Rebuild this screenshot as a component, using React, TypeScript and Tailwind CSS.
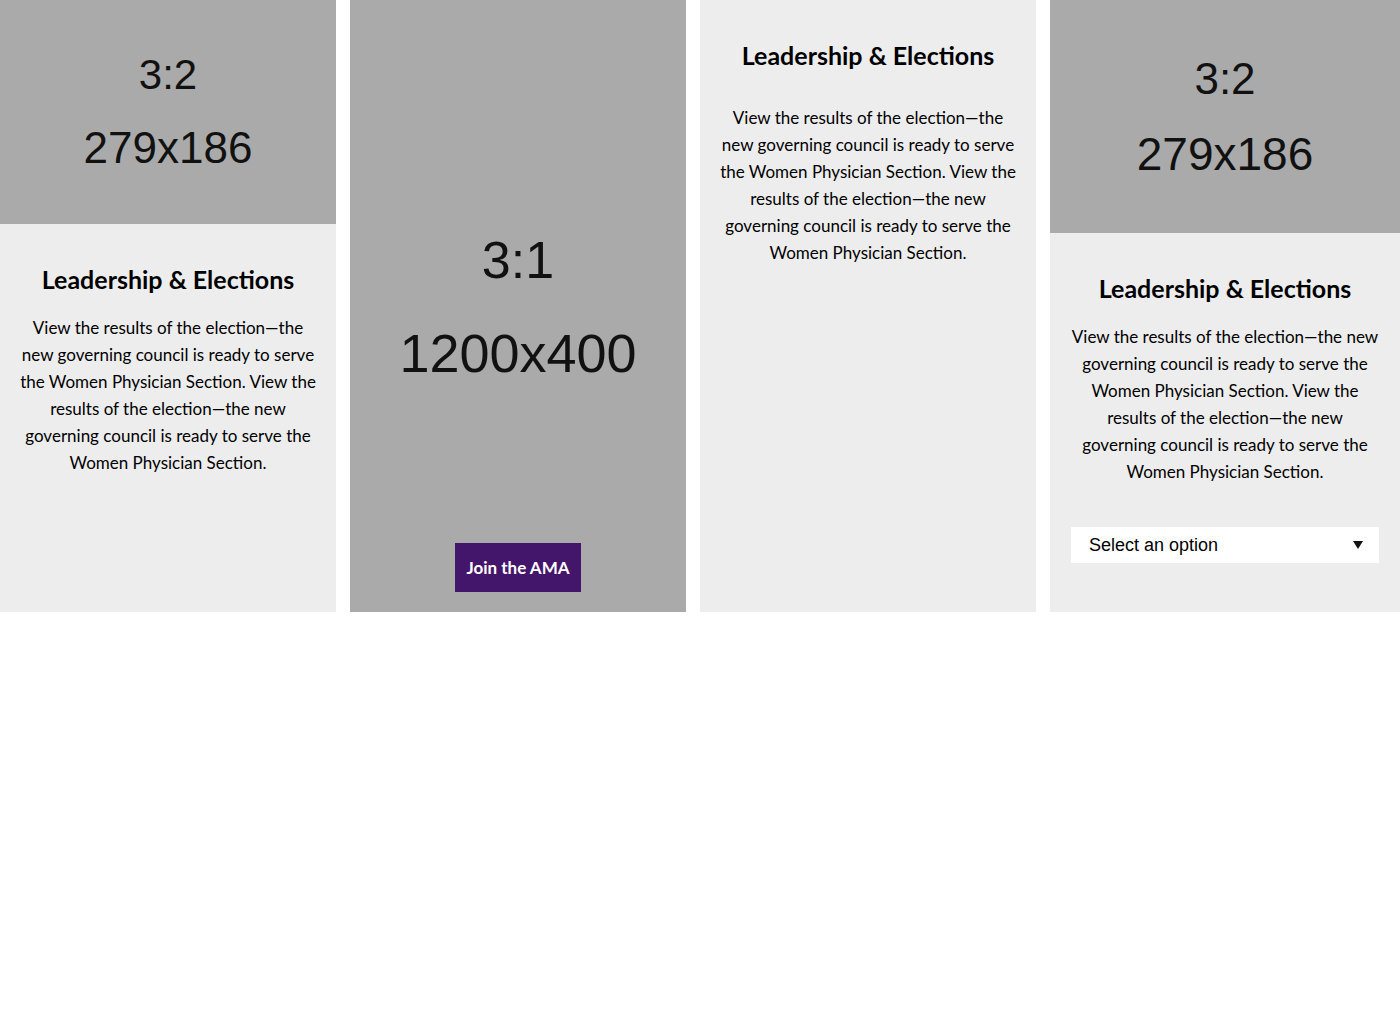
const body =
  "View the results of the election—the new governing council is ready to serve the Women Physician Section. View the results of the election—the new governing council is ready to serve the Women Physician Section.";

const sans = "font-['Lato','Open_Sans',sans-serif]";
const placeholder = "font-['Liberation_Sans',Arial,sans-serif] text-[#111] leading-none";

const Placeholder = ({ h, big }: { h: string; big: boolean }) => (
  <div className={`${h} bg-[#aaaaaa] flex flex-col items-center justify-center ${placeholder}`}>
    <span className={big ? "text-[44px]" : "text-[42px]"}>3:2</span>
    <span className={big ? "text-[46px] mt-[30px]" : "text-[44px] mt-[30px]"}>279x186</span>
  </div>
);

const Copy = ({ className = "" }: { className?: string }) => (
  <div className={`px-5 text-center text-black ${sans} ${className}`}>
    <h3 className="text-[25px] font-bold leading-[30px]">Leadership &amp; Elections</h3>
    <p className="mt-[20px] text-[17px] leading-[27px]">{body}</p>
  </div>
);

export default function App() {
  return (
    <div className="flex gap-[14px] h-[612px] bg-white">
      <div className="w-[336px] bg-[#ededed]">
        <Placeholder h="h-[224px]" big={false} />
        <Copy className="pt-[40px]" />
      </div>

      <div className="w-[336px] bg-[#aaaaaa] flex flex-col items-center">
        <div className={`flex-1 flex flex-col items-center justify-center ${placeholder}`}>
          <span className="text-[52px] mt-[70px]">3:1</span>
          <span className="text-[54px] mt-[40px]">1200x400</span>
        </div>
        <button className={`mb-[20px] h-[49px] px-[11px] bg-[#44166b] text-white text-[17px] font-bold ${sans}`}>
          Join the AMA
        </button>
      </div>

      <div className="w-[336px] bg-[#ededed]">
        <Copy className="pt-[40px] [&_p]:mt-[34px]" />
      </div>

      <div className="w-[350px] bg-[#ededed]">
        <Placeholder h="h-[233px]" big />
        <Copy className="pt-[40px]" />
        <div className="mx-[21px] mt-[42px] h-[36px] bg-white flex items-center justify-between pl-[18px] pr-[15px] font-['Liberation_Sans',Arial,sans-serif] text-[18px] text-black">
          <span>Select an option</span>
          <svg width="12" height="10" viewBox="0 0 12 10">
            <path d="M1 1h10L6 9z" fill="#111" />
          </svg>
        </div>
      </div>
    </div>
  );
}
